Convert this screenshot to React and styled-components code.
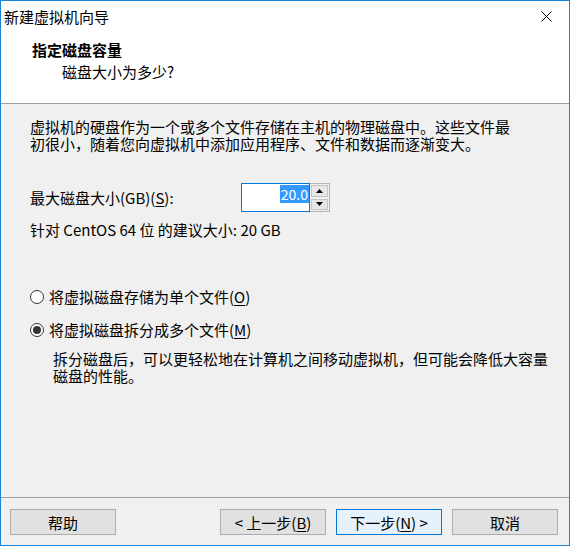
import styled, { createGlobalStyle } from "styled-components";

const GlobalStyle = createGlobalStyle`
  html, body {
    margin: 0;
    padding: 0;
    background: #ffffff;
  }
  body {
    font-family: "Noto Sans CJK SC", "Noto Sans", sans-serif;
    font-size: 15px;
    color: #000;
  }
`;

const Window = styled.div`
  width: 570px;
  height: 546px;
  box-sizing: border-box;
  border: 1px solid #1883d7;
  display: flex;
  flex-direction: column;
  background: #f0f0f0;
`;

const TitleBar = styled.div`
  height: 30px;
  background: #fff;
  display: flex;
  align-items: center;
  justify-content: space-between;
  padding-left: 3px;
  font-size: 15px;
  line-height: 17px;
`;

const CloseButton = styled.div`
  width: 46px;
  height: 30px;
  display: flex;
  align-items: center;
  justify-content: center;
`;

const Header = styled.div`
  height: 73px;
  background: #fff;
  border-bottom: 1px solid #a0a0a0;
  box-sizing: border-box;
  padding-top: 9px;
`;

const HeaderTitle = styled.div`
  padding-left: 31px;
  font-weight: bold;
  line-height: 19px;
`;

const HeaderSub = styled.div`
  padding-left: 61px;
  margin-top: 3px;
  line-height: 19px;
`;

const Body = styled.div`
  flex: 1;
  padding: 14px 0 0 29px;
  line-height: 17px;
`;

const Paragraph = styled.p`
  margin: 0;
  white-space: nowrap;
`;

const SizeRow = styled.div`
  display: flex;
  align-items: center;
  margin-top: 31px;
  height: 29px;
`;

const Label = styled.span`
  width: 211px;
`;

const Key = styled.span`
  text-decoration: underline;
  text-underline-offset: 2px;
`;

const SpinBox = styled.div`
  display: flex;
  height: 29px;
`;

const Input = styled.div`
  width: 69px;
  height: 29px;
  border: 1px solid #0078d7;
  background: #fff;
  display: flex;
  justify-content: flex-end;
  align-items: flex-start;
  padding-top: 1px;
  box-sizing: border-box;
  font-size: 14px;
`;

const Selected = styled.span`
  background: #3399ff;
  color: #fff;
  line-height: 18px;
  padding: 0 1px;
`;

const Spinners = styled.div`
  width: 20px;
  display: flex;
  flex-direction: column;
  border: 1px solid #b5b5b5;
  border-left: none;
  box-sizing: border-box;
`;

const SpinButton = styled.div`
  flex: 1;
  margin: 1px;
  background: #e6e6e6;
  border: 1px solid #c4c4c4;
  display: flex;
  align-items: center;
  justify-content: center;
`;

const Hint = styled.div`
  margin-top: 9px;
`;

const RadioGroup = styled.div`
  margin-top: 50px;
  display: flex;
  flex-direction: column;
  gap: 16px;
`;

const RadioRow = styled.div`
  display: flex;
  align-items: center;
  gap: 5px;
`;

const RadioCircle = styled.span`
  width: 14px;
  height: 14px;
  box-sizing: border-box;
  border-radius: 50%;
  border: 1px solid #333;
  background: #fff;
  display: flex;
  align-items: center;
  justify-content: center;
  &::after {
    content: "";
    width: 8px;
    height: 8px;
    border-radius: 50%;
    background: ${(p) => (p.$checked ? "#333" : "transparent")};
  }
`;

const Description = styled.p`
  margin: 12px 0 0 23px;
  white-space: nowrap;
`;

const Footer = styled.div`
  height: 48px;
  border-top: 1px solid #a0a0a0;
  box-sizing: border-box;
  display: flex;
  align-items: flex-start;
  padding: 11px 11px 0 9px;
`;

const Button = styled.div`
  width: 106px;
  height: 26px;
  box-sizing: border-box;
  border: 1px solid ${(p) => (p.$primary ? "#0078d7" : "#adadad")};
  background: ${(p) => (p.$primary ? "#e5f1fb" : "#e1e1e1")};
  display: flex;
  align-items: center;
  justify-content: center;
  line-height: 17px;
  margin-left: ${(p) => p.$gap || 0}px;
`;

const Arrow = ({ up }) => (
  <svg width="7" height="4" viewBox="0 0 7 4">
    <path d={up ? "M0 4 L3.5 0 L7 4 Z" : "M0 0 L3.5 4 L7 0 Z"} fill="#000" />
  </svg>
);

export default function App() {
  return (
    <>
      <GlobalStyle />
      <Window>
        <TitleBar>
          <span>新建虚拟机向导</span>
          <CloseButton>
            <svg width="11" height="11" viewBox="0 0 11 11">
              <path d="M0.5 0.5 L10.5 10.5 M10.5 0.5 L0.5 10.5" stroke="#000" strokeWidth="1" />
            </svg>
          </CloseButton>
        </TitleBar>
        <Header>
          <HeaderTitle>指定磁盘容量</HeaderTitle>
          <HeaderSub>磁盘大小为多少?</HeaderSub>
        </Header>
        <Body>
          <Paragraph>
            虚拟机的硬盘作为一个或多个文件存储在主机的物理磁盘中。这些文件最
            <br />
            初很小，随着您向虚拟机中添加应用程序、文件和数据而逐渐变大。
          </Paragraph>
          <SizeRow>
            <Label>
              最大磁盘大小(GB)(<Key>S</Key>):
            </Label>
            <SpinBox>
              <Input>
                <Selected>20.0</Selected>
              </Input>
              <Spinners>
                <SpinButton>
                  <Arrow up />
                </SpinButton>
                <SpinButton>
                  <Arrow />
                </SpinButton>
              </Spinners>
            </SpinBox>
          </SizeRow>
          <Hint>针对 CentOS 64 位 的建议大小: 20 GB</Hint>
          <RadioGroup>
            <RadioRow>
              <RadioCircle />
              <span>
                将虚拟磁盘存储为单个文件(<Key>O</Key>)
              </span>
            </RadioRow>
            <RadioRow>
              <RadioCircle $checked />
              <span>
                将虚拟磁盘拆分成多个文件(<Key>M</Key>)
              </span>
            </RadioRow>
          </RadioGroup>
          <Description>
            拆分磁盘后，可以更轻松地在计算机之间移动虚拟机，但可能会降低大容量
            <br />
            磁盘的性能。
          </Description>
        </Body>
        <Footer>
          <Button>帮助</Button>
          <Button $gap={104}>
            &lt; 上一步(<Key>B</Key>)
          </Button>
          <Button $primary $gap={10}>
            下一步(<Key>N</Key>) &gt;
          </Button>
          <Button $gap={10}>取消</Button>
        </Footer>
      </Window>
    </>
  );
}
